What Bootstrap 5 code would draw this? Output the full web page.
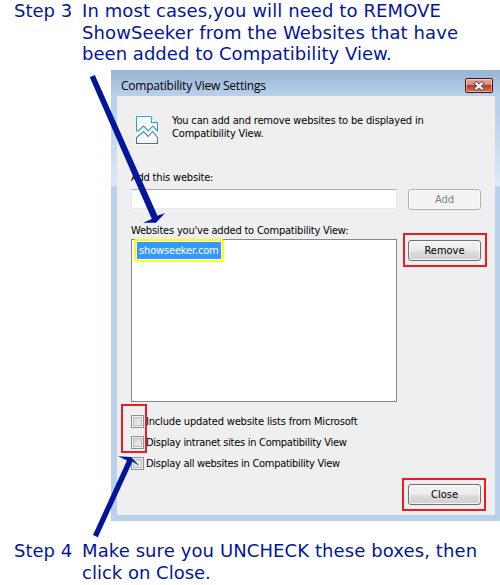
<!DOCTYPE html>
<html lang="en">
<head>
<meta charset="utf-8">
<meta name="viewport" content="width=device-width, initial-scale=1">
<title>Compatibility View Settings</title>
<link href="https://cdn.jsdelivr.net/npm/bootstrap@5.3.0/dist/css/bootstrap.min.css" rel="stylesheet">
<style>
body{background:#fff;width:500px;height:585px;overflow:hidden}
.guide{position:relative;width:500px;height:585px;overflow:hidden}
.step{font:18px/21.5px "DejaVu Sans",Verdana,sans-serif;color:#02169a;padding-left:14px;white-space:nowrap}
.step-name{width:68px;flex:none}
.step span{display:block}
.step-top{height:70px}
.step-end{padding-top:19px}
.l1{letter-spacing:.1px}.l2{letter-spacing:.1px}.l3{letter-spacing:.03px}.l4{letter-spacing:.1px}
.dialog-win{height:451px;margin-left:111px;padding:0 5px 6px 6px;background:linear-gradient(#99b4d1 0,#b9d1ea 26px,#b9d1ea 40px,#dce7f5 112px,#dce7f5 116px,#b9d1ea 117px);font:11px/13px "DejaVu Sans Condensed",Tahoma,sans-serif;color:#000;white-space:nowrap}
.title-bar{height:26px;padding:5px 2px 0 4px;font:12px/21px "Open Sans","Segoe UI",sans-serif}
.t-title{letter-spacing:-.23px}
.win-close{width:28px;height:15px;margin-top:3px;border:1px solid #4a111d;border-radius:2px;padding:0;background:linear-gradient(#e9aaa0,#d98477 48%,#b53b20 50%,#d77a62);box-shadow:inset 0 0 0 1px #ffffff66;line-height:0}
.client{height:419px;background:#efefef;padding:18px 14px 0;letter-spacing:-.17px}
.intro{height:57px;padding-left:4px}
.intro svg{margin-top:1px}
.intro-text{margin-left:13px}
.add-label{height:18px}
.list-label{height:15px;margin-top:14px;letter-spacing:-.2px}
.site-field{width:266px;height:20px;border:1px solid #e3e9ef;border-top-color:#abadb3;border-radius:1px;padding:0;background:#fff}
.win-btn{width:73px;height:21px;border:1px solid #707070;border-radius:3px;padding:0;font-size:11px;line-height:19px;background:linear-gradient(#f3f3f3,#ebebeb 50%,#dddddd 52%,#cfcfcf);box-shadow:inset 0 0 0 1px #ffffffb0;color:#000}
.win-btn:disabled{background:#f3f3f3;border-color:#adb2b5;color:#838383;opacity:1}
.marked{border:2px solid #ed1c24}
.remove-mark{margin:-6px -8px 0 6px;width:84px;height:34px;padding:5px 0 0 3px}
.site-list{width:266px;height:163px;border:1px solid #828790;background:#fff;padding:0 0 0 2px}
.site-mark{border:2px solid #ff0;border-radius:2px;width:90px;height:23px;padding:1px;background:#fff;margin-top:-1px}
.site-mark div{background:#39f;color:#fff;height:17px;width:84px;line-height:17px;padding-left:2px;letter-spacing:-.15px}
.checks{margin-top:9px}
.check-row{height:21px;line-height:21px}
.check-row.tight{letter-spacing:-.28px}
.check-box{width:13px;height:13px;border:1px solid #8e8f8f;background:linear-gradient(135deg,#cbcfd5,#f6f6f6);box-shadow:inset 0 0 0 1px #f4f4f4,inset 0 0 0 2px #b9bdc3;margin-right:2px}
.close-row{margin-top:4px}
.close-mark{width:84px;height:33px;padding:4px 0 0 4px;margin-right:-5px}
.box-mark{position:absolute;left:121px;top:404px;width:26px;height:49px}
.arrows{position:absolute;left:0;top:0;pointer-events:none}
</style>
<script src="https://cdn.jsdelivr.net/npm/bootstrap@5.3.0/dist/js/bootstrap.bundle.min.js"></script>
</head>
<body>
<main class="guide">
  <section class="step step-top d-flex">
    <div class="step-name">Step 3</div>
    <div><span class="l1">In most cases,you will need to REMOVE</span><span class="l2">ShowSeeker from the Websites that have</span><span class="l3">been added to Compatibility View.</span></div>
  </section>

  <section class="dialog-win">
    <header class="title-bar d-flex justify-content-between">
      <span class="t-title">Compatibility View Settings</span>
      <button class="win-close d-flex align-items-center justify-content-center" aria-label="Close window">
        <svg width="12" height="10" viewBox="0 0 12 10"><path d="M3.200 2.500 8.800 7.500M8.800 2.500 3.200 7.500" stroke="#555b69" stroke-width="4" stroke-linecap="square"/><path d="M3.200 2.500 8.800 7.500M8.800 2.500 3.200 7.500" stroke="#fff" stroke-width="2.100" stroke-linecap="square"/></svg>
      </button>
    </header>
    <div class="client">
      <div class="intro d-flex">
        <svg width="24" height="30" viewBox="0 0 24 30">
          <defs><linearGradient id="sheet" gradientUnits="userSpaceOnUse" x1="0" y1="1" x2="0" y2="29"><stop stop-color="#2fb0da"/><stop offset="1" stop-color="#3f6fb5"/></linearGradient></defs>
          <path d="M0 0H17L24 7V30H0Z" fill="#f8f8f8"/>
          <g fill="#fbfbfb" stroke="url(#sheet)" stroke-width="1.1"><path d="M1.500 16.500V1.500H16L22.500 8V16L17.700 11 13.200 16 8.500 11 2.500 16.500"/><path d="M16.500 1.500V7.500H22.500"/><path d="M1.500 28.500V22.500L8.500 16.500 13.200 21.500 17.700 16.500 22.500 22.500V28.500Z"/></g>
        </svg>
        <div class="intro-text">You can add and remove websites to be displayed in<br>Compatibility View.</div>
      </div>
      <div class="add-label">Add this website:</div>
      <div class="add-row d-flex justify-content-between">
        <input class="site-field" type="text" aria-label="Add this website">
        <button class="win-btn" disabled>Add</button>
      </div>
      <div class="list-label">Websites you've added to Compatibility View:</div>
      <div class="list-row d-flex">
        <div class="site-list"><div class="site-mark"><div>showseeker.com</div></div></div>
        <div class="marked remove-mark"><button class="win-btn">Remove</button></div>
      </div>
      <div class="checks">
        <label class="check-row d-flex align-items-center"><span class="check-box"></span><span>Include updated website lists from Microsoft</span></label>
        <label class="check-row tight d-flex align-items-center"><span class="check-box"></span><span>Display intranet sites in Compatibility View</span></label>
        <label class="check-row tight d-flex align-items-center"><span class="check-box"></span><span>Display all websites in Compatibility View</span></label>
      </div>
      <div class="d-flex justify-content-end close-row"><div class="marked close-mark"><button class="win-btn">Close</button></div></div>
    </div>
  </section>

  <section class="step step-end d-flex">
    <div class="step-name">Step 4</div>
    <div><span class="l4">Make sure you UNCHECK these boxes, then</span><span class="l5">click on Close.</span></div>
  </section>

  <div class="marked box-mark"></div>
  <svg class="arrows" width="500" height="585" viewBox="0 0 500 585">
    <g fill="#02169a"><path d="M89.800 77.300 94.800 75 157.500 215.800 165 213 156 222.800 143 222.800 151.800 219Z"/><path d="M93 535 97.800 537.200 132.500 461.500 139.500 466 131 457 118 456.300 127 460.500Z"/></g>
  </svg>
</main>
</body>
</html>
